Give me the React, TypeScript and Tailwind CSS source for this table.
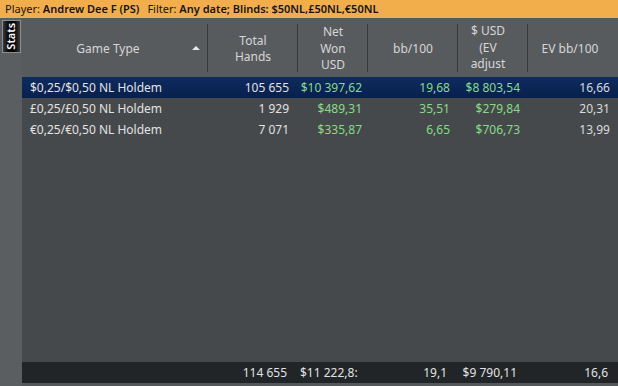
import React from "react";

const font = { fontFamily: '"Noto Sans", "Open Sans", sans-serif' };

interface Row {
  game: string;
  hands: string;
  won: string;
  bb: string;
  evUsd: string;
  evBb: string;
}

const rows: Row[] = [
  { game: "$0,25/$0,50 NL Holdem", hands: "105 655", won: "$10 397,62", bb: "19,68", evUsd: "$8 803,54", evBb: "16,66" },
  { game: "£0,25/£0,50 NL Holdem", hands: "1 929", won: "$489,31", bb: "35,51", evUsd: "$279,84", evBb: "20,31" },
  { game: "€0,25/€0,50 NL Holdem", hands: "7 071", won: "$335,87", bb: "6,65", evUsd: "$706,73", evBb: "13,99" },
];

const cols = "grid grid-cols-[186px_90px_70px_90px_70px_90px]";

function HeaderCell({
  lines,
  last,
  className = "",
  children,
}: {
  lines: string[];
  last?: boolean;
  className?: string;
  children?: React.ReactNode;
}) {
  return (
    <div className={`relative flex items-center justify-center pt-[3px] ${className}`}>
      <div className="flex flex-col items-center leading-[16.5px] text-[#d6d6d6]">
        {lines.map((l) => (
          <span key={l} className="whitespace-pre">{l}</span>
        ))}
      </div>
      {children}
      {!last && <div className="absolute right-0 top-[6px] bottom-[5px] w-px bg-[#36393b]" />}
    </div>
  );
}

export default function App() {
  return (
    <div className="flex h-screen w-full flex-col overflow-hidden bg-[#5b5e61] text-[12px]" style={font}>
      <div className="flex h-[18px] items-center gap-[8px] bg-[#f2ae4b] pl-[5px] text-[11px] text-[#141414]">
        <span>
          Player: <b className="font-semibold">Andrew Dee F (PS)</b>
        </span>
        <span>
          Filter: <b className="font-semibold">Any date; Blinds: $50NL,£50NL,€50NL</b>
        </span>
      </div>

      <div className="flex flex-1">
        <div className="w-[22px] shrink-0 bg-[#5b5e61] pl-[2px] pt-[2px]">
          <div className="flex h-[33px] w-[19px] items-center justify-center border border-[#8c8f92] bg-[linear-gradient(90deg,#3a3a3a,#000_35%,#000_65%,#3a3a3a)]">
            <span className="-rotate-90 text-[11px] font-semibold text-white">Stats</span>
          </div>
        </div>

        <div className="flex flex-1 flex-col bg-[#46494c]">
          <div className={`${cols} h-[59px] bg-[#585b5e]`}>
            <HeaderCell lines={["Game Type"]} className="pr-[14px]">
              <div className="absolute right-[8px] top-[28px] h-0 w-0 border-x-[4px] border-b-[4px] border-x-transparent border-b-[#e8e8e8]" />
            </HeaderCell>
            <HeaderCell lines={["Total", "Hands"]} />
            <HeaderCell lines={["Net", "Won", "USD"]} />
            <HeaderCell lines={["bb/100"]} />
            <div className="relative flex items-center pl-[4px] pt-[1px]">
              <div className="flex w-[52px] flex-col items-center leading-[16.5px] text-[#d6d6d6]">
                <span>$ USD</span>
                <span>(EV</span>
                <span>adjust</span>
              </div>
              <div className="absolute right-0 top-[6px] bottom-[5px] w-px bg-[#36393b]" />
            </div>
            <HeaderCell lines={["EV bb/100"]} className="pr-[6px]" last />
          </div>

          {rows.map((r, i) => (
            <div
              key={r.game}
              className={`${cols} h-[21px] items-center pt-[1px] ${
                i === 0 ? "bg-[linear-gradient(180deg,#0e2b5e,#08204c)]" : "bg-[#46494c]"
              }`}
            >
              <span className="pl-[8px] text-[#e2e2e2]">{r.game}</span>
              <span className="pr-[9px] text-right text-[#e2e2e2]">{r.hands}</span>
              <span className="pr-[6px] text-right text-[#86dc86]">{r.won}</span>
              <span className="pr-[8px] text-right text-[#86dc86]">{r.bb}</span>
              <span className="pr-[8px] text-right text-[#86dc86]">{r.evUsd}</span>
              <span className="pr-[8px] text-right text-[#dadada]">{r.evBb}</span>
            </div>
          ))}

          <div className="flex-1 bg-[#46494c]" />

          <div className={`${cols} h-[21px] items-center bg-[#212527] text-[#e2e2e2]`}>
            <span />
            <span className="pr-[11px] text-right">114 655</span>
            <span className="overflow-hidden whitespace-nowrap pl-[2px]">
              <span className="block w-[58px] overflow-hidden">$11 222,8:</span>
            </span>
            <span className="pr-[11px] text-right">19,1</span>
            <span className="pr-[11px] text-right">$9 790,11</span>
            <span className="pr-[10px] text-right">16,6</span>
          </div>
          <div className="h-[3px] bg-[#55585b]" />
        </div>
      </div>
    </div>
  );
}
